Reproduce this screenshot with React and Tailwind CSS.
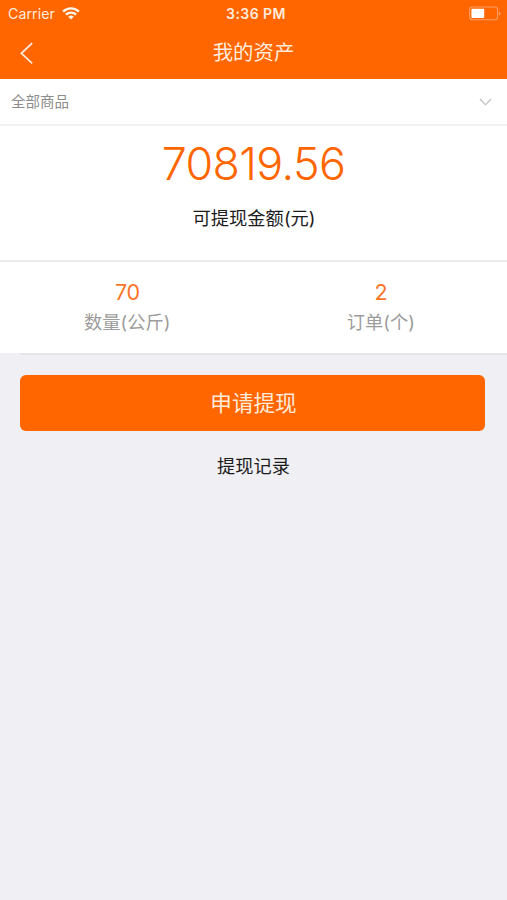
const latin = "font-['Inter','Liberation_Sans',sans-serif]";

function StatusBar() {
  return (
    <div className={`flex h-[27px] items-center justify-between ${latin}`}>
      <div className="flex w-[170px] items-center gap-[7px] pl-[8px]">
        <span className="text-[14.2px] leading-[27px] tracking-[0.05px] text-[#ffebdc]">Carrier</span>
        <svg className="h-[13px] w-[18px]" viewBox="0 0 18 13" fill="none" stroke="#fff5ec" strokeWidth="2.4">
          <path d="M1.1 4.6a11.4 11.4 0 0 1 15.8 0" />
          <path d="M3.9 7.7a7.4 7.4 0 0 1 10.2 0" />
          <path d="M9 12.6 6.2 9.8a4 4 0 0 1 5.6 0Z" fill="#fff5ec" stroke="none" />
        </svg>
      </div>
      <span className="pl-[5px] text-[14px] leading-[27px] font-semibold tracking-[0.45px] text-[#ffebdc]">3:36 PM</span>
      <div className="flex w-[170px] justify-end pr-[6px]">
        <svg className="h-[15px] w-[33px]" viewBox="0 0 33 15">
          <rect x="1.6" y="1" width="28" height="12.8" rx="2.8" fill="none" stroke="#ff9d62" strokeWidth="1.1" />
          <rect x="3.4" y="2.8" width="12.8" height="9.2" rx="0.8" fill="#fff" />
          <path d="M30.8 5.2v4.6q1.6-.8 1.6-2.3t-1.6-2.3Z" fill="#ff9d62" />
        </svg>
      </div>
    </div>
  );
}

function Header() {
  return (
    <header className="h-[79px] bg-[#ff6600]">
      <StatusBar />
      <div className="grid h-[50px] grid-cols-[60px_1fr_60px] items-center">
        <svg className="mt-[2px] ml-[19px] h-[24px] w-[16px]" viewBox="0 0 16 24" fill="none" stroke="#ffebdc" strokeWidth="1.8">
          <path d="M13.2 2.2 2.4 12.3 13.2 22.4" />
        </svg>
        <h1 className="pt-[2px] text-center text-[20.4px] leading-[48px] text-[#ffebdc]">我的资产</h1>
      </div>
    </header>
  );
}

function Stat({ value, label }) {
  return (
    <div className="flex flex-1 flex-col items-center pt-[15px] pl-px">
      <span className={`text-[21.5px] leading-[30px] tracking-[-0.5px] text-[#fa7428] ${latin}`}>{value}</span>
      <span className="text-[18.3px] leading-[30px] text-[#9c9c9c]">{label}</span>
    </div>
  );
}

export default function App() {
  return (
    <div className="flex h-[900px] w-[507px] flex-col overflow-hidden bg-[#efeff4] font-['Inter','Noto_Sans_CJK_SC',sans-serif]">
      <Header />
      <div className="flex h-[47px] items-center justify-between border-b-2 border-[#f1f1f1] bg-white pr-[15px] pl-[11px]">
        <span className="text-[14.5px] leading-[45px] text-[#8c8c8c]">全部商品</span>
        <svg className="h-[8px] w-[13px]" viewBox="0 0 13 8" fill="none" stroke="#b8b8b8" strokeWidth="1.1">
          <path d="M1 1 6.5 6.8 12 1" />
        </svg>
      </div>
      <section className="flex h-[136px] flex-col items-center border-b-2 border-[#ececee] bg-white pt-[10px]">
        <span className={`text-[44.8px] leading-[56px] font-[350] tracking-[-0.6px] text-[#ff6600] ${latin}`}>70819.56</span>
        <span className="mt-[11px] pl-px text-[18.3px] leading-[30px] text-[#1c1c1c]">可提现金额(元)</span>
      </section>
      <section className="flex h-[91px] bg-white">
        <Stat value="70" label="数量(公斤)" />
        <Stat value="2" label="订单(个)" />
      </section>
      <div className="ml-[20px] h-[2px] bg-[#e6e6e9]" />
      <button className="mt-[20px] mr-[22px] ml-[20px] h-[56px] rounded-[6px] bg-[#ff6600] pl-[2px] text-[21.6px] leading-[56px] text-[#ffebdc]">
        申请提现
      </button>
      <span className="mt-[20px] text-center text-[18.2px] leading-[30px] text-[#1c1c1c]">提现记录</span>
    </div>
  );
}
